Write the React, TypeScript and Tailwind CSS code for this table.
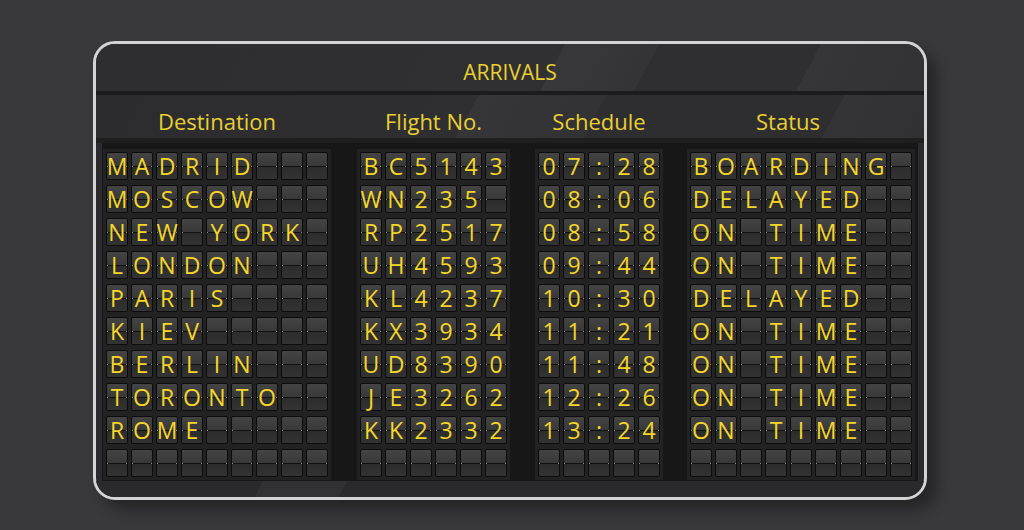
import React from 'react';

const COLS = [
  { key: 'dest', title: 'Destination', len: 9, width: 'w-[222px]', gap: '' },
  { key: 'flight', title: 'Flight No.', len: 6, width: 'w-[147px]', gap: 'ml-[32px]' },
  { key: 'time', title: 'Schedule', len: 5, width: 'w-[122px]', gap: 'ml-[31px]' },
  { key: 'status', title: 'Status', len: 9, width: 'w-[222px]', gap: 'ml-[30px]' },
];

const ROWS = [
  ['MADRID', 'BC5143', '07:28', 'BOARDING'],
  ['MOSCOW', 'WN235', '08:06', 'DELAYED'],
  ['NEW YORK', 'RP2517', '08:58', 'ON TIME'],
  ['LONDON', 'UH4593', '09:44', 'ON TIME'],
  ['PARIS', 'KL4237', '10:30', 'DELAYED'],
  ['KIEV', 'KX3934', '11:21', 'ON TIME'],
  ['BERLIN', 'UD8390', '11:48', 'ON TIME'],
  ['TORONTO', 'JE3262', '12:26', 'ON TIME'],
  ['ROME', 'KK2332', '13:24', 'ON TIME'],
  ['', '', '', ''],
];

const Tile = ({ ch }: { ch: string }) => (
  <div className="relative w-[22px] h-[28px] rounded-[2px] border border-[#0c0c0c] bg-[linear-gradient(#444444,#393939_48%,#2c2c2c_52%,#333333)] flex items-center justify-center">
    <div className="absolute left-0 right-0 top-[13px] h-px bg-black/60" />
    <div className="absolute left-0 top-[13px] w-px h-px bg-[#8a8a8a]" />
    <div className="absolute right-0 top-[13px] w-px h-px bg-[#8a8a8a]" />
    <span className="relative text-[#f4d62a] text-[23px] font-medium leading-none">{ch}</span>
  </div>
);

export default function App() {
  return (
    <div className="w-[1024px] h-[530px] bg-[#39393b] pt-[41px] pl-[93px] font-['Open_Sans',sans-serif]">
      <div className="w-[834px] h-[459px] border-[3px] border-[#d4d4d4] rounded-[22px] overflow-hidden bg-[#2b2b2d] flex flex-col shadow-[10px_10px_14px_rgba(0,0,0,0.35)]">
        {/* title */}
        <div className="h-[47px] flex items-center justify-center pt-[9px] bg-[linear-gradient(118deg,#2e2e30_0%,#303032_55%,#38383a_55%,#343436_66%,#2f2f31_66%,#2f2f31_85%,#363638_85%,#323234_100%)]">
          <span className="text-[#e9cf33] text-[21px] font-medium leading-none">ARRIVALS</span>
        </div>
        <div className="h-[4px] bg-[#1c1c1d]" />
        {/* column titles */}
        <div className="h-[43px] flex px-[10px] items-end pb-[6px] bg-[linear-gradient(118deg,#2c2c2e_0%,#2f2f31_45%,#363638_45%,#323234_60%,#2e2e30_60%,#2e2e30_88%,#343436_88%,#313133_100%)]">
          {COLS.map(c => (
            <div key={c.key} className={`${c.width} ${c.gap} flex justify-center ${c.key === 'status' ? 'pr-[26px]' : ''}`}>
              <span className="text-[#e9cf33] text-[22px] font-medium leading-none">{c.title}</span>
            </div>
          ))}
        </div>
        <div className="h-[5px] bg-[#1f1f20]" />
        {/* grid */}
        <div className="mx-[6px] bg-[#171717] pt-[6px] pb-[1px] pl-[1px] flex">
          {COLS.map((c, ci) => (
            <div
              key={c.key}
              className={`bg-[#222223] p-[3px] flex flex-col gap-[5px] ${ci === 1 ? 'ml-[26px]' : ci === 2 ? 'ml-[25px]' : ci === 3 ? 'ml-[24px]' : ''}`}
            >
              {ROWS.map((r, ri) => {
                const txt = r[ci].padEnd(c.len, ' ');
                return (
                  <div key={ri} className="flex gap-[3px]">
                    {txt.split('').map((ch, i) => (
                      <Tile key={i} ch={ch === ' ' ? '' : ch} />
                    ))}
                  </div>
                );
              })}
            </div>
          ))}
        </div>
        <div className="flex-1 bg-[linear-gradient(118deg,#2a2a2c_0%,#2a2a2c_20%,#323234_20%,#323234_30%,#2a2a2c_30%)]" />
      </div>
    </div>
  );
}
